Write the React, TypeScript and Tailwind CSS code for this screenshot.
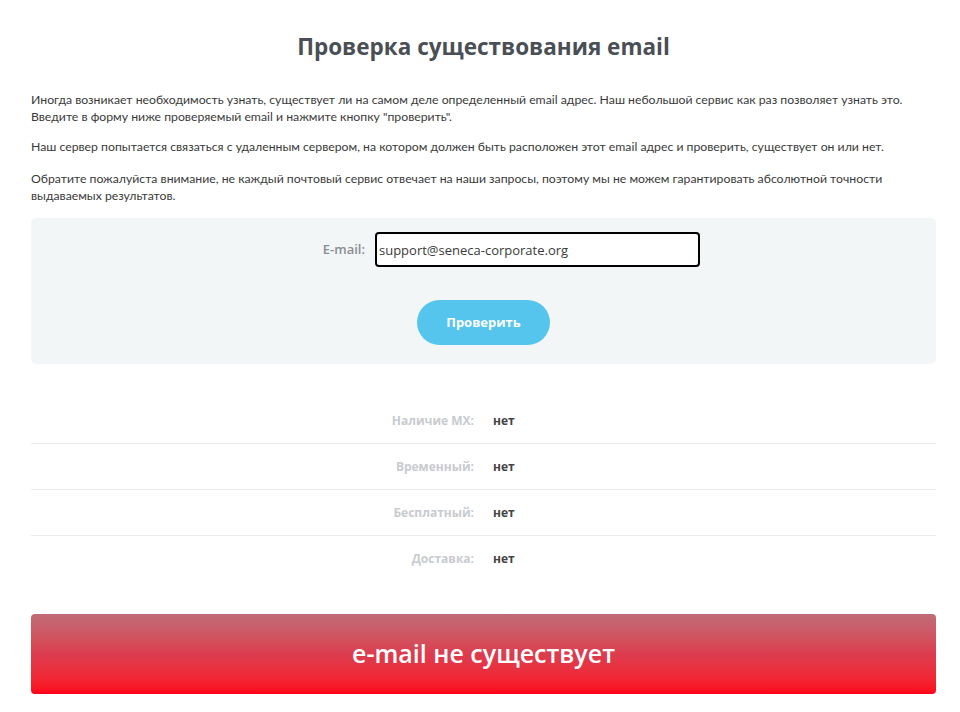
import React from 'react';

const rows = [
  { label: 'Наличие MX:', value: 'нет' },
  { label: 'Временный:', value: 'нет' },
  { label: 'Бесплатный:', value: 'нет' },
  { label: 'Доставка:', value: 'нет' },
];

export default function App() {
  return (
    <div className="min-h-screen bg-white font-['Lato',sans-serif]">
      <div className="ml-[31px] mr-[24px] pt-[33px]">
        <h1 className="text-center text-[22.5px] font-bold leading-[28px] text-[#4a4f55] font-['Open_Sans',sans-serif]">
          Проверка существования email
        </h1>

        <div className="mt-[30px] text-[12.25px] leading-[17px] text-[#3a3a3a]">
          <p>
            Иногда возникает необходимость узнать, существует ли на самом деле определенный email адрес. Наш небольшой сервис как раз позволяет узнать это.
            <br />
            Введите в форму ниже проверяемый email и нажмите кнопку "проверить".
          </p>
          <p className="mt-[13px]">
            Наш сервер попытается связаться с удаленным сервером, на котором должен быть расположен этот email адрес и проверить, существует он или нет.
          </p>
          <p className="mt-[15px]">
            Обратите пожалуйста внимание, не каждый почтовый сервис отвечает на наши запросы, поэтому мы не можем гарантировать абсолютной точности
            <br />
            выдаваемых результатов.
          </p>
        </div>

        <div className="mt-[14px] rounded-[5px] bg-[#f2f6f7] pt-[14px] pb-[19px]">
          <div className="flex items-start">
            <label className="w-[344px] pt-[8px] pr-[10px] text-right text-[13px] font-semibold text-[#8a8d91] font-['Open_Sans',sans-serif]">
              E-mail:
            </label>
            <input
              type="text"
              defaultValue="support@seneca-corporate.org"
              className="h-[35px] w-[325px] rounded-[4px] border-2 border-black bg-white px-[2px] text-[13px] text-[#3a3a3a] outline-none font-['Open_Sans',sans-serif]"
            />
          </div>
          <div className="mt-[33px] flex justify-center">
            <button className="h-[45px] w-[133px] rounded-full bg-[#55c5ed] text-[13px] font-bold text-white font-['Open_Sans',sans-serif]">
              Проверить
            </button>
          </div>
        </div>

        <div className="mt-[34px] font-['Open_Sans',sans-serif] text-[12px] font-bold">
          {rows.map((r, i) => (
            <div
              key={r.label}
              className={'flex h-[46px] items-center ' + (i < rows.length - 1 ? 'border-b border-[#ececec]' : '')}
            >
              <div className="w-[443px] text-right text-[#c8cbcf]">{r.label}</div>
              <div className="ml-[19px] text-[#444]">{r.value}</div>
            </div>
          ))}
        </div>

        <div className="mt-[32px] flex h-[80px] items-center justify-center rounded-[4px] bg-gradient-to-b from-[#bf6b77] via-[#dc3c4e] to-[#ff0018]">
          <span className="text-[25px] font-semibold text-white font-['Open_Sans',sans-serif]">e-mail не существует</span>
        </div>
      </div>
    </div>
  );
}
